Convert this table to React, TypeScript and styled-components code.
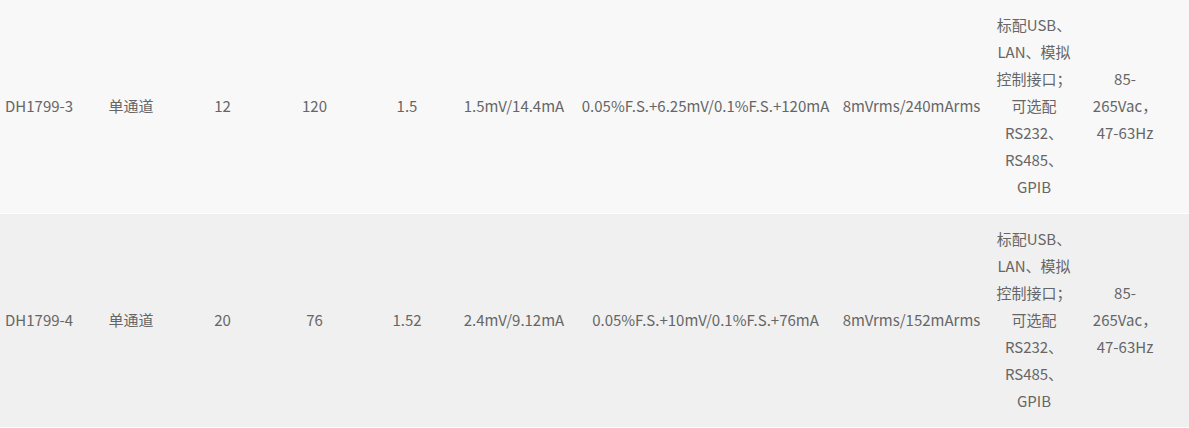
import styled, { createGlobalStyle } from 'styled-components';

const GlobalStyle = createGlobalStyle`
  html, body {
    margin: 0;
    padding: 0;
    background: #fff;
  }
`;

const Table = styled.table`
  width: 1189px;
  table-layout: fixed;
  border-collapse: collapse;
  font-family: 'Noto Sans CJK SC', 'Noto Sans', sans-serif;
  font-size: 15px;
  line-height: 27px;
  color: #666;
`;

interface RowProps {
  shade: string;
}

const Row = styled.tr<RowProps>`
  background: ${({ shade }) => shade};
  border-bottom: 1px solid #fff;
`;

const Cell = styled.td`
  padding: 11px 5px 13px;
  text-align: center;
  vertical-align: middle;

  &:first-child {
    text-align: left;
  }

  &:last-child {
    padding-right: 25px;
  }
`;

const widths = [85, 92, 91, 93, 92, 122, 261, 151, 94, 108];

const rows = [
  {
    shade: '#f8f8f8',
    cells: [
      'DH1799-3',
      '单通道',
      '12',
      '120',
      '1.5',
      '1.5mV/14.4mA',
      '0.05%F.S.+6.25mV/0.1%F.S.+120mA',
      '8mVrms/240mArms',
      '标配USB、LAN、模拟控制接口；可选配RS232、RS485、GPIB',
      '85-265Vac，47-63Hz',
    ],
  },
  {
    shade: '#f0f0f0',
    cells: [
      'DH1799-4',
      '单通道',
      '20',
      '76',
      '1.52',
      '2.4mV/9.12mA',
      '0.05%F.S.+10mV/0.1%F.S.+76mA',
      '8mVrms/152mArms',
      '标配USB、LAN、模拟控制接口；可选配RS232、RS485、GPIB',
      '85-265Vac，47-63Hz',
    ],
  },
];

export default function App() {
  return (
    <>
      <GlobalStyle />
      <Table>
        <colgroup>
          {widths.map((w, i) => (
            <col key={i} style={{ width: w }} />
          ))}
        </colgroup>
        <tbody>
          {rows.map((row) => (
            <Row key={row.cells[0]} shade={row.shade}>
              {row.cells.map((c, i) => (
                <Cell key={i}>{c}</Cell>
              ))}
            </Row>
          ))}
        </tbody>
      </Table>
    </>
  );
}
